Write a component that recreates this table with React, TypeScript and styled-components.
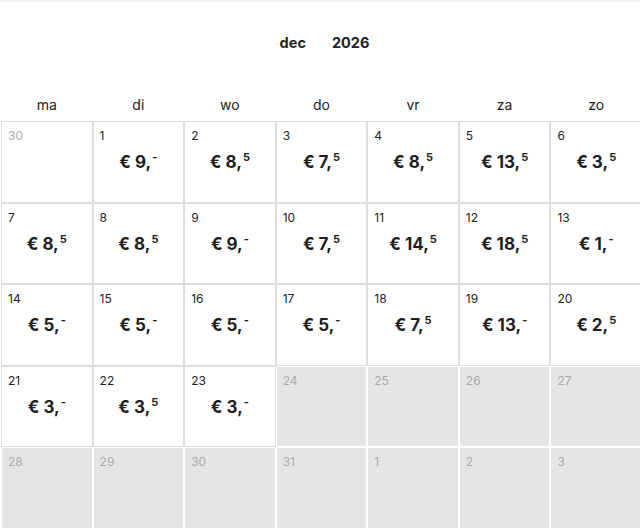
import React from "react";
import styled, { createGlobalStyle } from "styled-components";

const GlobalStyle = createGlobalStyle`
  html, body {
    margin: 0;
    padding: 0;
    background: #ffffff;
    overflow: hidden;
  }
  body {
    font-family: "Inter", "Liberation Sans", sans-serif;
    color: #222222;
  }
`;

const Calendar = styled.div`
  width: 641px;
  padding-left: 1px;
  border-top: 2px solid #f2f2f2;
`;

const Title = styled.div`
  display: flex;
  justify-content: center;
  align-items: center;
  gap: 26px;
  height: 80px;
  padding-left: 6px;
  font-size: 14.5px;
  font-weight: 700;
  color: #222222;
`;

const WeekRow = styled.div`
  display: grid;
  grid-template-columns: repeat(7, 1fr);
  height: 39px;
  align-items: center;
`;

const WeekDay = styled.div`
  text-align: center;
  font-size: 14px;
  color: #222222;
  padding-top: 5px;
`;

const Grid = styled.div`
  display: grid;
  grid-template-columns: repeat(7, 1fr);
  grid-auto-rows: 81.5px;
`;

const Cell = styled.div<{ $closed?: boolean }>`
  display: flex;
  flex-direction: column;
  padding: 7px 6px;
  background: ${(p) => (p.$closed ? "#e5e5e5" : "#ffffff")};
  border: 1px solid ${(p) => (p.$closed ? "#ffffff" : "#dddddd")};
`;

const DayNum = styled.span<{ $muted?: boolean }>`
  font-size: 12px;
  line-height: 14px;
  color: ${(p) => (p.$muted ? "#ababab" : "#222222")};
`;

const Price = styled.div`
  margin-top: 9px;
  text-align: center;
  font-size: 17px;
  line-height: 20px;
  font-weight: 700;
  color: #1e1e1e;
`;

const Sup = styled.span`
  font-size: 11px;
  line-height: 0;
  vertical-align: 7px;
  margin-left: 1px;
`;

type Day = { n: number; price?: string; muted?: boolean; closed?: boolean };

const prices: Record<number, string> = {
  1: "9,-", 2: "8,5", 3: "7,5", 4: "8,5", 5: "13,5", 6: "3,5",
  7: "8,5", 8: "8,5", 9: "9,-", 10: "7,5", 11: "14,5", 12: "18,5", 13: "1,-",
  14: "5,-", 15: "5,-", 16: "5,-", 17: "5,-", 18: "7,5", 19: "13,-", 20: "2,5",
  21: "3,-", 22: "3,5", 23: "3,-",
};

const days: Day[] = [
  { n: 30, muted: true },
  ...Array.from({ length: 31 }, (_, i) => {
    const n = i + 1;
    return n <= 23
      ? { n, price: prices[n] }
      : { n, muted: true, closed: true };
  }),
  { n: 1, muted: true, closed: true },
  { n: 2, muted: true, closed: true },
  { n: 3, muted: true, closed: true },
];

const weekDays = ["ma", "di", "wo", "do", "vr", "za", "zo"];

const PriceTag = ({ value }: { value: string }) => {
  const [whole, cents] = value.split(",");
  return (
    <Price>
      € {whole},<Sup>{cents}</Sup>
    </Price>
  );
};

const App = () => (
  <>
    <GlobalStyle />
    <Calendar>
      <Title>
        <span>dec</span>
        <span>2026</span>
      </Title>
      <WeekRow>
        {weekDays.map((d) => (
          <WeekDay key={d}>{d}</WeekDay>
        ))}
      </WeekRow>
      <Grid>
        {days.map((d, i) => (
          <Cell key={i} $closed={d.closed}>
            <DayNum $muted={d.muted}>{d.n}</DayNum>
            {d.price && <PriceTag value={d.price} />}
          </Cell>
        ))}
      </Grid>
    </Calendar>
  </>
);

export default App;
